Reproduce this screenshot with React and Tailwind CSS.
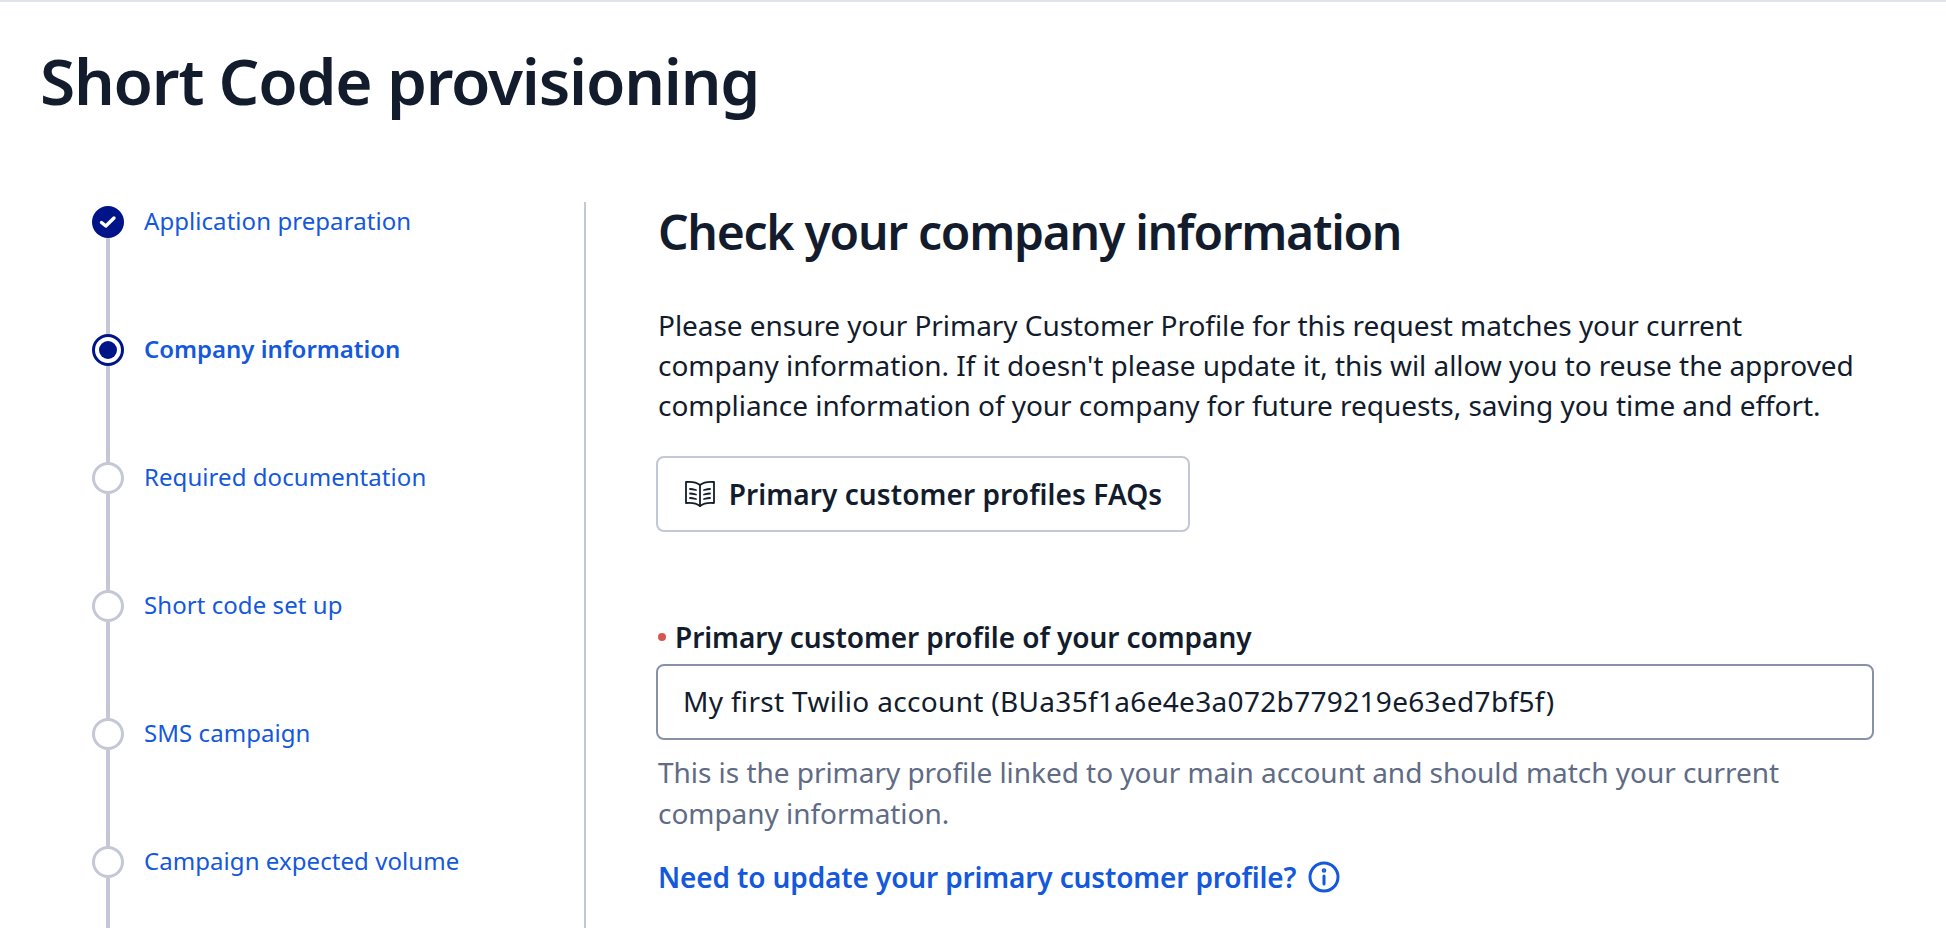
import React from "react";

function Step({ label, state }) {
  return (
    <div className="flex h-[128px] gap-[20px]">
      <div className="flex w-[32px] shrink-0 flex-col items-center">
        {state === "done" && (
          <div className="flex h-[32px] w-[32px] shrink-0 items-center justify-center rounded-full bg-[#001489]">
            <svg width="18" height="14" viewBox="0 0 18 14" fill="none">
              <path d="M2.5 7.5L6.8 11L15 3" stroke="white" strokeWidth="3.4" strokeLinecap="round" strokeLinejoin="round" />
            </svg>
          </div>
        )}
        {state === "current" && (
          <div className="flex h-[32px] w-[32px] shrink-0 items-center justify-center rounded-full border-[3px] border-[#001489] bg-white">
            <div className="h-[18px] w-[18px] rounded-full bg-[#001489]" />
          </div>
        )}
        {state === "todo" && (
          <div className="h-[32px] w-[32px] shrink-0 rounded-full border-[3px] border-[#c4c7d5] bg-white" />
        )}
        <div className="w-[4px] flex-1 bg-[#c4c7d5]" />
      </div>
      <div className={`-mt-[1px] h-[32px] text-[24px] leading-[32px] text-[#1458dc] ${state === "current" ? "font-semibold tracking-[-0.03px]" : "font-normal tracking-[0.06px]"}`}>
        {label}
      </div>
    </div>
  );
}

export default function App() {
  return (
    <div className="h-[928px] w-[1946px] overflow-hidden border-t-2 border-[#e1e3ea] bg-white font-['Noto_Sans',sans-serif] text-[#121c2d]">
      <h1 className="pl-[40px] pt-[37px] text-[64px] font-semibold leading-[84px] tracking-[-1.22px]">Short Code provisioning</h1>
      <div className="mt-[79px] flex">
        <div className="w-[584px] shrink-0 pl-[92px] pt-[4px]">
          <Step label="Application preparation" state="done" />
          <Step label="Company information" state="current" />
          <Step label="Required documentation" state="todo" />
          <Step label="Short code set up" state="todo" />
          <Step label="SMS campaign" state="todo" />
          <Step label="Campaign expected volume" state="todo" />
        </div>
        <div className="h-[800px] w-[2px] shrink-0 bg-[#c4c7d5]" />
        <div className="w-[1220px] pl-[72px]">
          <h2 className="text-[48px] font-semibold leading-[60px] tracking-[-1.27px]">Check your company information</h2>
          <p className="mt-[43px] w-[1220px] text-[28px] leading-[40px] tracking-[-0.05px]">
            Please ensure your Primary Customer Profile for this request matches your current
            <br />
            company information. If it doesn't please update it, this wil allow you to reuse the approved
            <br />
            compliance information of your company for future requests, saving you time and effort.
          </p>
          <button className="-ml-[2px] mt-[31px] flex h-[76px] w-[534px] items-center justify-center gap-[13px] rounded-[8px] border-2 border-[#c4c7d5] bg-white text-[28px] font-semibold tracking-[0.08px]">
            <svg width="32" height="30" viewBox="0 0 32 30" fill="none" stroke="#121c2d" strokeWidth="1.8" strokeLinejoin="round" strokeLinecap="round">
              <path d="M16 6C13 3.5 8 2.5 2 3V24C8 23.5 13 24.5 16 27C19 24.5 24 23.5 30 24V3C24 2.5 19 3.5 16 6Z" />
              <path d="M16 6V27" />
              <path d="M6 10C8 10 10 10.5 12 11M6 14.5C8 14.5 10 15 12 15.5M6 19C8 19 10 19.5 12 20M20 11C22 10.5 24 10 26 10M20 15.5C22 15 24 14.5 26 14.5M20 20C22 19.5 24 19 26 19" />
            </svg>
            <span>Primary customer profiles FAQs</span>
          </button>
          <div className="mt-[85px] flex items-center gap-[9px] text-[28px] font-semibold leading-[40px] tracking-[-0.06px]">
            <span className="h-[8px] w-[8px] rounded-full bg-[#d6574f]" />
            <span>Primary customer profile of your company</span>
          </div>
          <div className="-ml-[2px] mt-[7px] flex h-[76px] w-[1218px] items-center rounded-[8px] border-2 border-[#8891aa] pb-[3px] pl-[25px] text-[28px] tracking-[0.32px]">
            My first Twilio account (BUa35f1a6e4e3a072b779219e63ed7bf5f)
          </div>
          <p className="mt-[12px] text-[28px] leading-[41px] tracking-[-0.04px] text-[#606b85]">
            This is the primary profile linked to your main account and should match your current
            <br />
            company information.
          </p>
          <div className="mt-[23px] flex items-center gap-[12px] text-[28px] font-semibold leading-[40px] tracking-[-0.14px] text-[#1458dc]">
            <span>Need to update your primary customer profile?</span>
            <svg width="32" height="32" viewBox="0 0 32 32" fill="none" stroke="#1458dc" strokeWidth="3" strokeLinecap="round">
              <circle cx="16" cy="16" r="14" />
              <path d="M16 15V23" />
              <circle cx="16" cy="9.5" r="0.8" fill="#1458dc" />
            </svg>
          </div>
        </div>
      </div>
    </div>
  );
}
